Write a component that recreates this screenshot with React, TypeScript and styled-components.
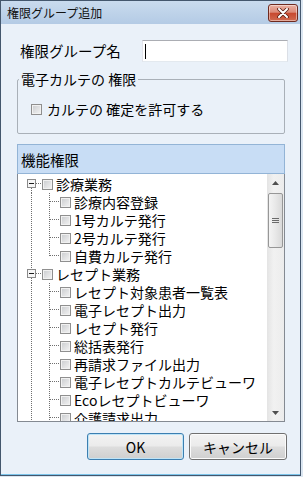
import styled, { createGlobalStyle } from 'styled-components'

// ── Global ─────────────────────────────────────────────────────────────────────

const GlobalStyle = createGlobalStyle`
  html, body { margin: 0; padding: 0; }
  body {
    background: #dbe6f1;
    font-family: "Noto Sans CJK JP", "Noto Sans", sans-serif;
  }
`

// ── Window frame ───────────────────────────────────────────────────────────────

const Window = styled.div`
  width: 301px;
  height: 476px;
  box-sizing: border-box;
  border: 1px solid #44576d;
  display: flex;
  flex-direction: column;
  background: #eaf1f9;
`

const TitleBar = styled.div`
  height: 23px;
  flex: none;
  display: flex;
  align-items: center;
  justify-content: space-between;
  padding: 0 2px 0 6px;
  background: linear-gradient(#c9dbee, #b4cbe5);
`

const Title = styled.span`
  font-size: 12px;
  line-height: 14px;
  color: #111;
`

const CloseButton = styled.div`
  width: 30px;
  height: 18px;
  box-sizing: border-box;
  border: 1px solid #6e2a1f;
  border-radius: 3px;
  display: flex;
  align-items: center;
  justify-content: center;
  background: linear-gradient(#eab0a2 0%, #dc8a78 45%, #c8492f 52%, #d06a50 100%);
  box-shadow: inset 0 0 0 1px rgba(255, 255, 255, 0.45);
`

const Client = styled.div`
  flex: 1;
  display: flex;
  flex-direction: column;
  padding: 16px 15px 0 16px;
  border-bottom: 1px solid #7cc4ea;
`

// ── Name row ───────────────────────────────────────────────────────────────────

const NameRow = styled.div`
  display: flex;
  align-items: center;
  height: 22px;
  padding-left: 3px;
  margin-right: -3px;
`

const Label = styled.span`
  width: 122px;
  flex: none;
  font-size: 14.5px;
  line-height: 18px;
  color: #000;
`

const TextBox = styled.div`
  position: relative;
  width: 146px;
  height: 22px;
  box-sizing: border-box;
  border: 1px solid;
  border-color: #abadb3 #dbdfe6 #e3e9ef #e2e3ea;
  background: #fff;
  &::after {
    content: '';
    position: absolute;
    left: 2px;
    top: 3px;
    width: 1px;
    height: 15px;
    background: #000;
  }
`

// ── Group box ──────────────────────────────────────────────────────────────────

const GroupBox = styled.fieldset`
  margin: 9px 0 0;
  padding: 0;
  min-width: 0;
  border: 1px solid #a9b0b8;
  border-radius: 2px;
`

const Legend = styled.legend`
  margin-left: 1px;
  padding: 0 2px;
  font-size: 14px;
  line-height: 16px;
  color: #000;
`

const CheckRow = styled.label`
  display: flex;
  align-items: center;
  gap: 5px;
  height: 16px;
  padding: 14px 13px 16px;
  font-size: 14px;
  line-height: 16px;
  color: #000;
`

const CheckBox = styled.span`
  flex: none;
  width: 11px;
  height: 11px;
  box-sizing: border-box;
  border: 1px solid #8f8f8f;
  background: linear-gradient(135deg, #c9cbce, #f4f4f4);
  box-shadow: inset 0 0 0 1px #f1f1f1;
`

// ── Permission panel ───────────────────────────────────────────────────────────

const Panel = styled.section`
  margin-top: 10px;
  display: flex;
  flex-direction: column;
`

const PanelHeader = styled.div`
  height: 30px;
  box-sizing: border-box;
  border: 1px solid #93b4d6;
  background: #c8ddf5;
  display: flex;
  align-items: center;
  padding-left: 3px;
  font-size: 14.5px;
  color: #000;
`

const Tree = styled.div`
  height: 248px;
  box-sizing: border-box;
  border: 1px solid #848a92;
  border-top: none;
  background: #fff;
  display: flex;
`

const TreeRows = styled.div`
  flex: 1;
  overflow: hidden;
  padding-top: 1px;
`

const Row = styled.div`
  display: flex;
  align-items: center;
  height: 18px;
  white-space: nowrap;
`

const Guides = styled.svg`
  flex: none;
  display: block;
`

const RowLabel = styled.div`
  margin-left: 3px;
  height: 16px;
  font-size: 14px;
  line-height: 16px;
  color: #000;
`

const ScrollBar = styled.div`
  width: 17px;
  flex: none;
  display: flex;
  flex-direction: column;
  background: linear-gradient(90deg, #e4e4e4, #f1f1f1 40%, #ececec);
`

const ScrollButton = styled.div`
  height: 17px;
  flex: none;
  display: flex;
  align-items: center;
  justify-content: center;
`

const Thumb = styled.div`
  height: 55px;
  margin: 2px 1px 0;
  box-sizing: border-box;
  border: 1px solid #979797;
  border-radius: 2px;
  background: linear-gradient(90deg, #f4f4f4, #e8e8e8 50%, #d9d9d9);
  display: flex;
  align-items: center;
  justify-content: center;
`

const Spacer = styled.div`flex: 1;`

// ── Buttons ────────────────────────────────────────────────────────────────────

const ButtonRow = styled.div`
  display: flex;
  justify-content: flex-end;
  gap: 5px;
  margin: 11px -2px 0 0;
`

const Button = styled.button<{ $primary?: boolean; $w: number }>`
  width: ${p => p.$w}px;
  height: 27px;
  box-sizing: border-box;
  border: 1px solid ${p => (p.$primary ? '#3c7fb1' : '#707070')};
  border-radius: 3px;
  background: linear-gradient(#f3f3f3 0%, #ebebeb 48%, #dddddd 52%, #cfcfcf 100%);
  box-shadow: inset 0 0 0 1px ${p => (p.$primary ? '#bfe4f7' : '#fbfbfb')};
  font-family: "Noto Sans CJK JP", "Noto Sans", sans-serif;
  font-size: 14px;
  color: #000;
  padding: 0;
`

// ── Tree data ──────────────────────────────────────────────────────────────────

interface TreeGroup {
  label: string
  children: string[]
  open: boolean
}

const groups: TreeGroup[] = [
  {
    label: '診療業務',
    open: true,
    children: ['診療内容登録', '1号カルテ発行', '2号カルテ発行', '自費カルテ発行'],
  },
  {
    label: 'レセプト業務',
    open: false,
    children: [
      'レセプト対象患者一覧表',
      '電子レセプト出力',
      'レセプト発行',
      '総括表発行',
      '再請求ファイル出力',
      '電子レセプトカルテビューワ',
      'Ecoレセプトビューワ',
      '介護請求出力',
    ],
  },
]

const LINE = '#6f6f6f'

function RootGuides({ first }: { first: boolean }) {
  return (
    <Guides width="24" height="18">
      {!first && <line x1="13.5" y1="0" x2="13.5" y2="4" stroke={LINE} strokeDasharray="1 1" shapeRendering="crispEdges" />}
      <line x1="13.5" y1="13" x2="13.5" y2="18" stroke={LINE} strokeDasharray="1 1" shapeRendering="crispEdges" />
      <line x1="18" y1="8.5" x2="24" y2="8.5" stroke={LINE} strokeDasharray="1 1" shapeRendering="crispEdges" />
      <rect x="9.5" y="4.5" width="8" height="8" fill="#f6f6f6" stroke="#8a8a8a" shapeRendering="crispEdges" />
      <line x1="11" y1="8.5" x2="16" y2="8.5" stroke="#1c1c1c" shapeRendering="crispEdges" />
    </Guides>
  )
}

function ChildGuides({ last }: { last: boolean }) {
  return (
    <Guides width="42" height="18">
      <line x1="13.5" y1="0" x2="13.5" y2="18" stroke={LINE} strokeDasharray="1 1" shapeRendering="crispEdges" />
      <line x1="31.5" y1="0" x2="31.5" y2={last ? 9 : 18} stroke={LINE} strokeDasharray="1 1" shapeRendering="crispEdges" />
      <line x1="32" y1="8.5" x2="42" y2="8.5" stroke={LINE} strokeDasharray="1 1" shapeRendering="crispEdges" />
    </Guides>
  )
}

// ── Component ──────────────────────────────────────────────────────────────────

export default function App() {
  return (
    <>
      <GlobalStyle />
      <Window>
        <TitleBar>
          <Title>権限グループ追加</Title>
          <CloseButton>
            <svg width="12" height="10" viewBox="0 0 12 10">
              <path d="M2 1 L10 9 M10 1 L2 9" stroke="#5a1e14" strokeWidth="3.6" strokeLinecap="round" />
              <path d="M2 1 L10 9 M10 1 L2 9" stroke="#fff" strokeWidth="2" strokeLinecap="round" />
            </svg>
          </CloseButton>
        </TitleBar>

        <Client>
          <NameRow>
            <Label>権限グループ名</Label>
            <TextBox />
          </NameRow>

          <GroupBox>
            <Legend>電子カルテの 権限</Legend>
            <CheckRow>
              <CheckBox />
              カルテの 確定を許可する
            </CheckRow>
          </GroupBox>

          <Panel>
            <PanelHeader>機能権限</PanelHeader>
            <Tree>
              <TreeRows>
                {groups.map((g, gi) => (
                  <div key={g.label}>
                    <Row>
                      <RootGuides first={gi === 0} />
                      <CheckBox />
                      <RowLabel>{g.label}</RowLabel>
                    </Row>
                    {g.children.map((c, ci) => (
                      <Row key={c}>
                        <ChildGuides last={g.open && ci === g.children.length - 1} />
                        <CheckBox />
                        <RowLabel>{c}</RowLabel>
                      </Row>
                    ))}
                  </div>
                ))}
              </TreeRows>
              <ScrollBar>
                <ScrollButton>
                  <svg width="7" height="4"><path d="M3.5 0 L7 4 L0 4 Z" fill="#4f4f4f" /></svg>
                </ScrollButton>
                <Thumb>
                  <svg width="7" height="5">
                    <path d="M0 0.5 H7 M0 2.5 H7 M0 4.5 H7" stroke="#6a6a6a" shapeRendering="crispEdges" />
                  </svg>
                </Thumb>
                <Spacer />
                <ScrollButton>
                  <svg width="7" height="4"><path d="M0 0 L7 0 L3.5 4 Z" fill="#4f4f4f" /></svg>
                </ScrollButton>
              </ScrollBar>
            </Tree>
          </Panel>

          <ButtonRow>
            <Button $primary $w={97}>OK</Button>
            <Button $w={98}>キャンセル</Button>
          </ButtonRow>
        </Client>
      </Window>
    </>
  )
}
